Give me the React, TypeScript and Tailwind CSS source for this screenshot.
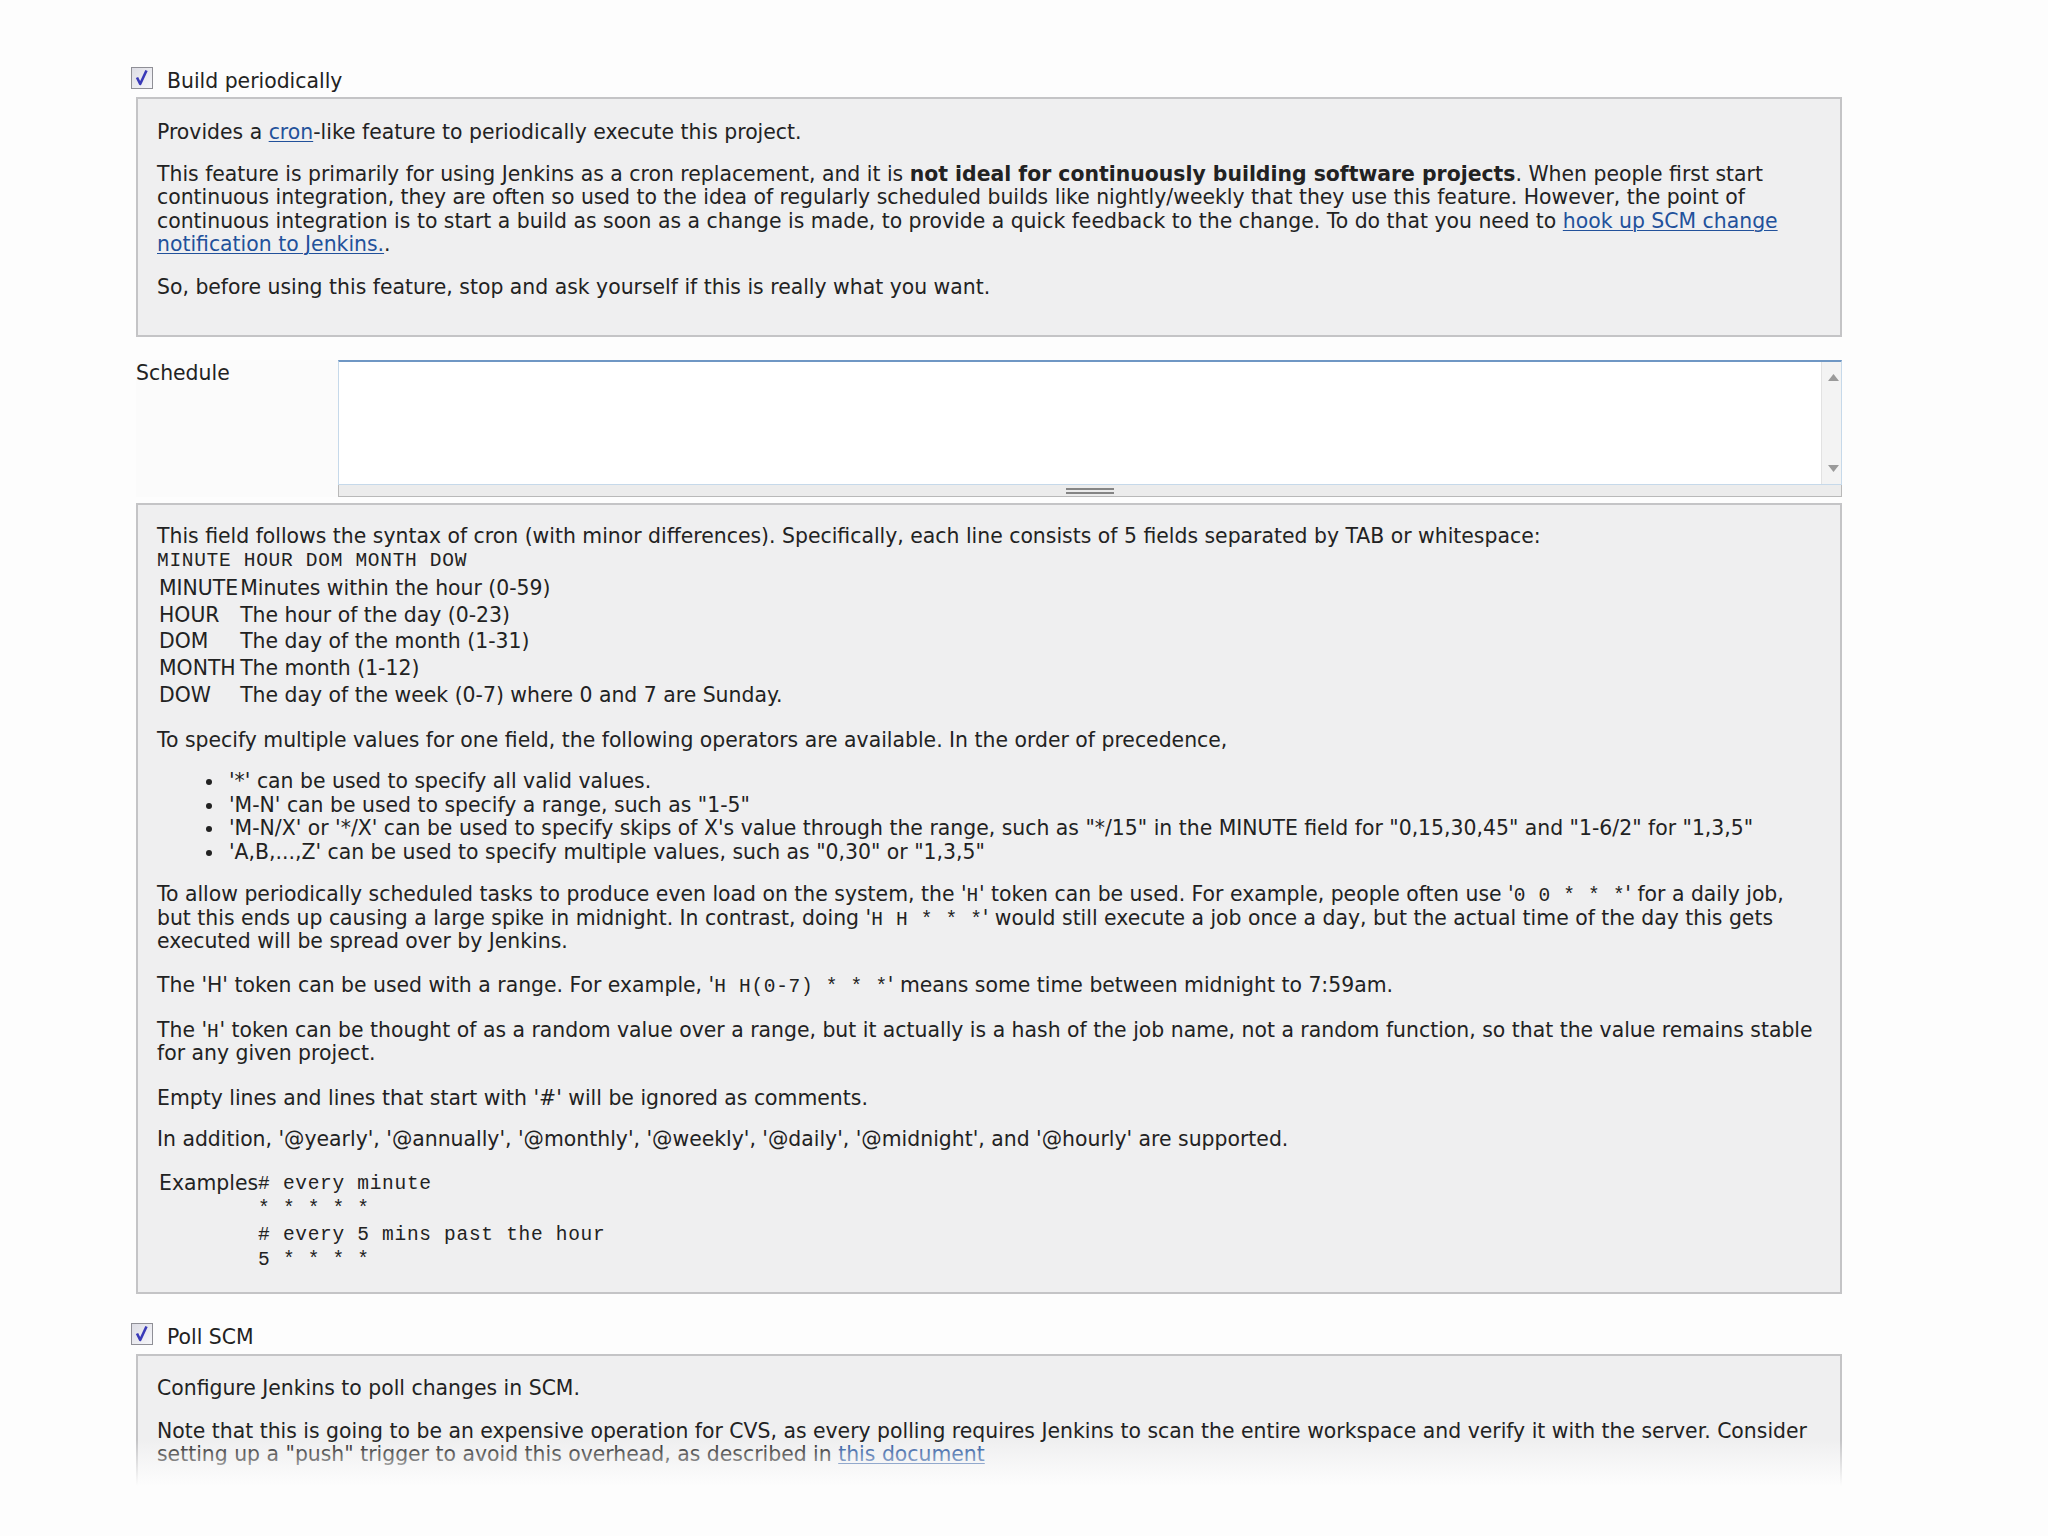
import { ReactNode } from "react";

const sans = "font-['DejaVu_Sans',sans-serif]";
const mono = "font-['Liberation_Mono',monospace]";

function Tt({ children }: { children: ReactNode }) {
  return <span className={`${mono} text-[19.5px] tracking-[0.7px] leading-none`}>{children}</span>;
}

function Link({ children }: { children: ReactNode }) {
  return <a className="text-[#22519b] underline underline-offset-2 decoration-1">{children}</a>;
}

function Checkbox() {
  return (
    <svg width="22" height="22" viewBox="0 0 22 22" className="shrink-0">
      <defs>
        <linearGradient id="cbg" x1="0" y1="0" x2="1" y2="1">
          <stop offset="0" stopColor="#dcdce4" />
          <stop offset="1" stopColor="#f7f7fa" />
        </linearGradient>
      </defs>
      <rect x="0.5" y="0.5" width="21" height="21" fill="url(#cbg)" stroke="#8f8f96" />
      <path d="M6 10.5 L9.2 17 L15.5 3.5" fill="none" stroke="#3a3ab8" strokeWidth="2.6" strokeLinejoin="round" />
    </svg>
  );
}

function Section({ title }: { title: string }) {
  return (
    <div className="flex items-start gap-[14px] h-[22px]">
      <Checkbox />
      <span className="pt-[3px] text-[#222] leading-[23.5px]">{title}</span>
    </div>
  );
}

function Bullet({ children }: { children: ReactNode }) {
  return (
    <li className="flex items-center">
      <span className="w-[23px] shrink-0">
        <span className="block w-[6px] h-[6px] rounded-full bg-[#222]" />
      </span>
      <span>{children}</span>
    </li>
  );
}

export default function App() {
  return (
    <div className={`${sans} relative w-[2048px] h-[1536px] bg-[#fdfdfd] overflow-hidden text-[#222] text-[20.4px] leading-[23.5px]`}>
      <div className="pl-[131px] pt-[67px] w-[1842px]">
        {/* Build periodically */}
        <Section title="Build periodically" />
        <div className="ml-[5px] mt-[8px] h-[240px] bg-[#efeff0] border-2 border-[#c4c4c6] pl-[19px] pt-[22px]">
          <p>
            Provides a <Link>cron</Link>-like feature to periodically execute this project.
          </p>
          <p className="mt-[18px]">
            This feature is primarily for using Jenkins as a cron replacement, and it is{" "}
            <b>not ideal for continuously building software projects</b>. When people first start
            <br />
            continuous integration, they are often so used to the idea of regularly scheduled builds like nightly/weekly that they use this feature. However, the point of
            <br />
            continuous integration is to start a build as soon as a change is made, to provide a quick feedback to the change. To do that you need to{" "}
            <Link>
              hook up SCM change
              <br />
              notification to Jenkins.
            </Link>
            .
          </p>
          <p className="mt-[19px]">So, before using this feature, stop and ask yourself if this is really what you want.</p>
        </div>

        {/* Schedule */}
        <div className="ml-[5px] mt-[23px] flex bg-[#fbfbfb]">
          <div className="w-[202px] pt-[2px]">Schedule</div>
          <div className="flex-1 flex flex-col">
            <div className="flex h-[125px] bg-white border border-[#c6d9ea] border-t-2 border-t-[#6f97c4]">
              <div className="flex-1" />
              <div className="w-[20px] bg-[#f3f3f3] border-l border-[#e2e2e2] flex flex-col items-center justify-between py-[12px] pl-[4px]">
                <svg width="11" height="7" viewBox="0 0 11 7">
                  <path d="M0 7 L5.5 0 L11 7 Z" fill="#9a9a9a" />
                </svg>
                <svg width="11" height="7" viewBox="0 0 11 7">
                  <path d="M0 0 L5.5 7 L11 0 Z" fill="#9a9a9a" />
                </svg>
              </div>
            </div>
            <div className="h-[12px] bg-[#ececec] border border-t-0 border-[#b9b9b9] flex justify-center items-center">
              <div className="w-[48px] flex flex-col gap-[2px]">
                <div className="h-[2px] bg-[#858585]" />
                <div className="h-[2px] bg-[#858585]" />
              </div>
            </div>
          </div>
        </div>

        {/* Cron help */}
        <div className="ml-[5px] mt-[6px] h-[791px] bg-[#efeff0] border-2 border-[#c4c4c6] pl-[19px] pt-[20px]">
          <p>
            This field follows the syntax of cron (with minor differences). Specifically, each line consists of 5 fields separated by TAB or whitespace:
          </p>
          <div className="h-[27px] flex items-start pt-[3px]">
            <Tt>MINUTE HOUR DOM MONTH DOW</Tt>
          </div>
          <table className="ml-[2px] border-separate border-spacing-0">
            <tbody>
              {[
                ["MINUTE", "Minutes within the hour (0-59)"],
                ["HOUR", "The hour of the day (0-23)"],
                ["DOM", "The day of the month (1-31)"],
                ["MONTH", "The month (1-12)"],
                ["DOW", "The day of the week (0-7) where 0 and 7 are Sunday."],
              ].map(([k, v]) => (
                <tr key={k} className="h-[26.7px]">
                  <td className="pr-[2px] align-middle">{k}</td>
                  <td className="align-middle">{v}</td>
                </tr>
              ))}
            </tbody>
          </table>
          <p className="mt-[20px]">
            To specify multiple values for one field, the following operators are available. In the order of precedence,
          </p>
          <ul className="mt-[18px] pl-[49px]">
            <Bullet>'*' can be used to specify all valid values.</Bullet>
            <Bullet>'M-N' can be used to specify a range, such as "1-5"</Bullet>
            <Bullet>
              'M-N/X' or '*/X' can be used to specify skips of X's value through the range, such as "*/15" in the MINUTE field for "0,15,30,45" and "1-6/2" for "1,3,5"
            </Bullet>
            <Bullet>'A,B,...,Z' can be used to specify multiple values, such as "0,30" or "1,3,5"</Bullet>
          </ul>
          <p className="mt-[19px]">
            To allow periodically scheduled tasks to produce even load on the system, the '<Tt>H</Tt>' token can be used. For example, people often use '<Tt>0 0 * * *</Tt>' for a daily job,
            <br />
            but this ends up causing a large spike in midnight. In contrast, doing '<Tt>H H * * *</Tt>' would still execute a job once a day, but the actual time of the day this gets
            <br />
            executed will be spread over by Jenkins.
          </p>
          <p className="mt-[20.5px]">
            The 'H' token can be used with a range. For example, '<Tt>H H(0-7) * * *</Tt>' means some time between midnight to 7:59am.
          </p>
          <p className="mt-[21px]">
            The '<Tt>H</Tt>' token can be thought of as a random value over a range, but it actually is a hash of the job name, not a random function, so that the value remains stable
            <br />
            for any given project.
          </p>
          <p className="mt-[21px]">Empty lines and lines that start with '#' will be ignored as comments.</p>
          <p className="mt-[18px]">
            In addition, '@yearly', '@annually', '@monthly', '@weekly', '@daily', '@midnight', and '@hourly' are supported.
          </p>
          <div className="mt-[19px] ml-[2px] flex">
            <div className="leading-[25.5px]">Examples</div>
            <div className={`${mono} text-[19.5px] tracking-[0.7px] leading-[25.5px] text-[#222] whitespace-pre pt-[1px]`}>
              {"# every minute\n* * * * *\n# every 5 mins past the hour\n5 * * * *"}
            </div>
          </div>
        </div>

        {/* Poll SCM */}
        <div className="mt-[29px]">
          <Section title="Poll SCM" />
        </div>
        <div className="ml-[5px] mt-[9px] h-[200px] bg-[#efeff0] border-2 border-[#c4c4c6] pl-[19px] pt-[21px]">
          <p>Configure Jenkins to poll changes in SCM.</p>
          <p className="mt-[19px]">
            Note that this is going to be an expensive operation for CVS, as every polling requires Jenkins to scan the entire workspace and verify it with the server. Consider
            <br />
            setting up a "push" trigger to avoid this overhead, as described in <Link>this document</Link>
          </p>
        </div>
      </div>

      {/* bottom fade */}
      <div className="absolute left-0 right-0 top-[1440px] h-[46px] bg-gradient-to-b from-[#fdfdfd00] to-[#fdfdfd]" />
      <div className="absolute left-0 right-0 top-[1486px] bottom-0 bg-[#fdfdfd]" />
    </div>
  );
}
